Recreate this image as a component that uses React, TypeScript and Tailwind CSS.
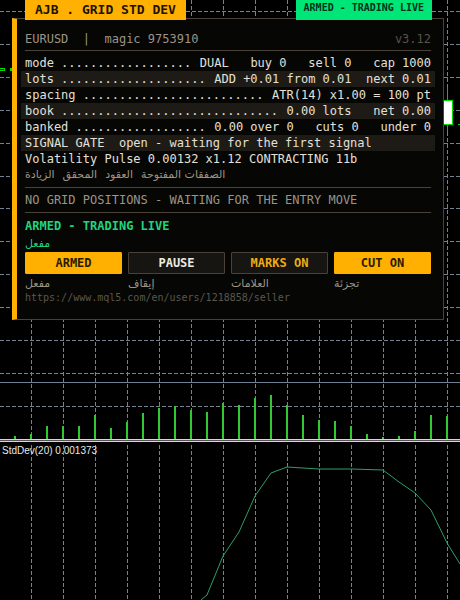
import React from "react";

const mono = "font-['DejaVu_Sans_Mono','Liberation_Mono',monospace]";
const arabic = "font-['DejaVu_Sans','Noto_Sans',sans-serif]";

const columns = Array.from({ length: 15 }, (_, i) => 31 + i * 32);
const levels = [11, 44, 77, 110, 143, 176, 208, 241, 274, 307, 340, 373, 406];
const volumes = [3, 5, 13, 13, 13, 24, 11, 17, 26, 31, 33, 29, 27, 36, 34, 41, 44, 34, 24, 19, 18, 13, 5, 2, 3, 8, 24, 23];

const stats = [
  { label: "mode", dots: 18, value: "DUAL   buy 0   sell 0   cap 1000" },
  { label: "lots", dots: 20, value: "ADD +0.01 from 0.01  next 0.01" },
  { label: "spacing", dots: 25, value: "ATR(14) x1.00 = 100 pt" },
  { label: "book", dots: 30, value: "0.00 lots   net 0.00" },
  { label: "banked", dots: 18, value: "0.00 over 0   cuts 0   under 0" },
];

const controls = [
  { label: "ARMED", caption: "مفعل", look: "border-[#ffb000] bg-[#ffb000] text-[#2a1c00]" },
  { label: "PAUSE", caption: "إيقاف", look: "border-[#4a4238] bg-[#161512] text-[#eeeae0]" },
  { label: "MARKS ON", caption: "العلامات", look: "border-[#4a4238] bg-[#161512] text-[#f0aa14]" },
  { label: "CUT ON", caption: "تجزئة", look: "border-[#ffb000] bg-[#ffb000] text-[#2a1c00]" },
];

function Chart() {
  return (
    <svg className="absolute inset-0 h-full w-full" viewBox="0 0 460 600" preserveAspectRatio="xMinYMin slice" shapeRendering="crispEdges" aria-hidden="true">
      <g stroke="#76828f" strokeDasharray="4 2">
        {columns.map((x) => (
          <path key={x} d={`M${x + 0.5} 0V438M${x + 0.5} 445V600`} />
        ))}
        {levels.map((y) => (
          <path key={y} d={`M0 ${y + 0.5}H460`} />
        ))}
      </g>
      <path d="M0 382.5H460" stroke="#708090" />
      <g fill="#32c832">
        {volumes.map((h, i) => (
          <rect key={i} x={14 + i * 16} y={439 - h} width="2" height={h} />
        ))}
      </g>
      <path d="M0 439.5H460M0 441.5H460" stroke="#d8d4d8" />
      <path d="M0 440.5H460" stroke="#5c505c" />
      <path d="M0 69.5H5M10 69.5H12" stroke="#00e000" strokeWidth="3" />
      <path d="M0 69.5H4" stroke="#000" />
      <path d="M447.5 87V132M458 124.5H460" stroke="#00c800" />
      <rect x="443.5" y="100.5" width="9" height="24" fill="#fff" stroke="#00e000" />
      <path
        d="M201 600L207 595L223 556L239 532L255 496L271 473L287 467L319 469H351L383 470L399 482L415 493L431 510L447 543L460 564"
        fill="none"
        stroke="#2e9e68"
        shapeRendering="auto"
      />
    </svg>
  );
}

export default function App() {
  return (
    <main className={`relative min-h-screen overflow-hidden bg-black ${mono}`}>
      <Chart />
      <div className="relative flex min-h-[439px] flex-col pr-4 pl-3">
        <header className="relative z-10 -mb-0.5 flex h-5 justify-between pr-3 pl-[13px]">
          <h1 className="flex h-5 items-center bg-[#ffb000] px-[10px] text-[13px] leading-5 font-bold whitespace-pre text-[#1c1300]">
            AJB . GRID STD DEV
          </h1>
          <strong className="flex h-5 items-center bg-[#00e676] px-2 pb-1 text-[10px] leading-4 font-bold text-[#00301a]">
            ARMED - TRADING LIVE
          </strong>
        </header>

        <section className="border border-l-[5px] border-[#4a4238] border-l-[#ffb000] bg-[#060605] px-3 pt-2 pb-[15px] pl-2 text-[12px] leading-4 text-[#e4e0d8]">
          <div className="flex h-6 items-center justify-between border-b border-[#4a4238] leading-6 text-[#9c9484]">
            <p className="whitespace-pre">EURUSD  |  magic 9753910</p>
            <span className="text-[#5a5348]">v3.12</span>
          </div>

          <dl className="-mx-1 pt-1">
            {stats.map((s) => (
              <div key={s.label} className="flex h-4 justify-between px-1 whitespace-pre even:bg-[#1e1b17]">
                <dt>{`${s.label} ${".".repeat(s.dots)}`}</dt>
                <dd>{s.value}</dd>
              </div>
            ))}
            <div className="flex h-4 bg-[#1e1b17] px-1">
              <dt className="whitespace-pre">{"SIGNAL GATE  "}</dt>
              <dd>open - waiting for the first signal</dd>
            </div>
          </dl>
          <p className="h-4">Volatility Pulse 0.00132 x1.12 CONTRACTING 11b</p>
          <p dir="ltr" className={`flex h-5 gap-2 text-[11px] leading-4 text-[#9c9484] ${arabic}`}>
            <bdi>الزيادة</bdi>
            <bdi>المحقق</bdi>
            <bdi>العقود</bdi>
            <bdi>الصفقات المفتوحة</bdi>
          </p>

          <p className="border-y border-[#4a4238] py-1 text-[#9c9484]">NO GRID POSITIONS - WAITING FOR THE ENTRY MOVE</p>

          <p className="pt-[5px] font-bold text-[#1fd57c]">ARMED - TRADING LIVE</p>
          <p className={`h-[18px] pt-0.5 text-[11px] leading-4 text-[#1fd57c] ${arabic}`}>مفعل</p>
          <div className="grid grid-cols-4 gap-1.5">
            {controls.map((c) => (
              <div key={c.label}>
                <button type="button" className={`flex h-[22px] w-full items-center justify-center rounded-[1px] border font-bold ${c.look}`}>
                  {c.label}
                </button>
                <p className={`h-[18px] pt-0.5 text-[11px] leading-4 text-[#9c9484] ${arabic}`}>{c.caption}</p>
              </div>
            ))}
          </div>
          <a href="https://www.mql5.com/en/users/1218858/seller" className="block text-[10px] leading-3 text-[#5c564a]">
            https://www.mql5.com/en/users/1218858/seller
          </a>
        </section>
      </div>
      <p className="relative px-0.5 pt-1 font-['Liberation_Sans',sans-serif] text-[10px] leading-4 text-[#e8e8e8]">StdDev(20) 0.001373</p>
    </main>
  );
}
